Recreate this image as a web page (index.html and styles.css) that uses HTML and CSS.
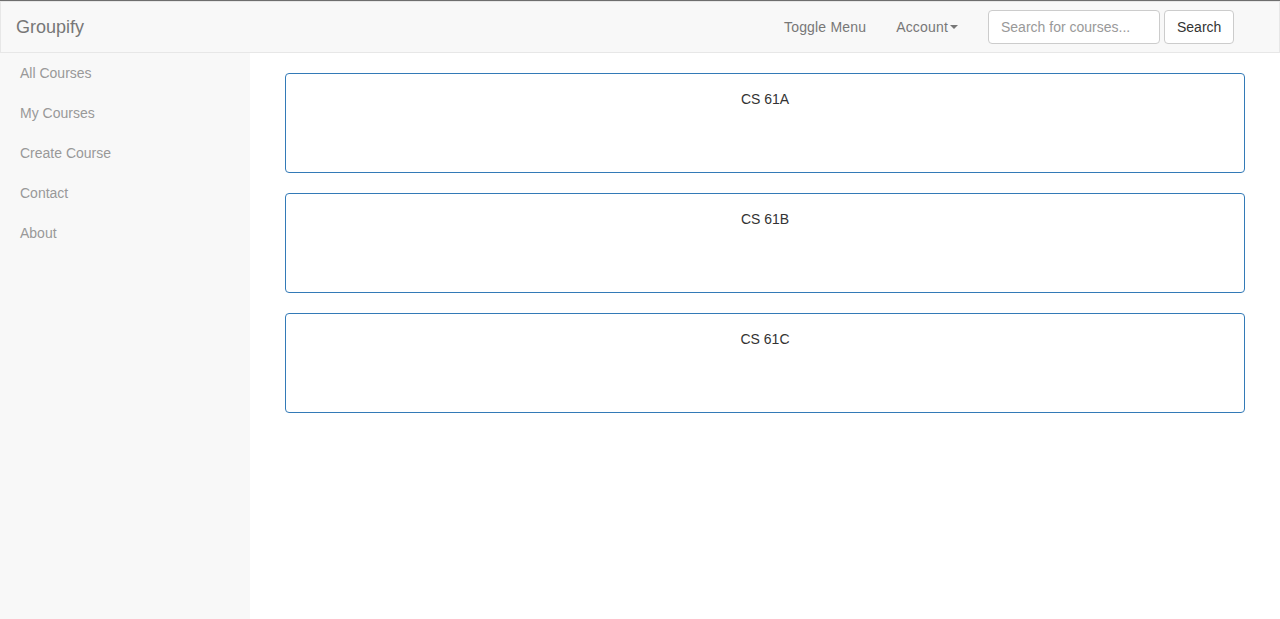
FILE: index.html
```html
<!DOCTYPE html>
<html>
<head>
<meta charset="utf-8">
<title>Groupify</title>
<link rel="stylesheet" href="styles.css">
</head>
<body>
<nav class="navbar">
  <a class="brand" href="#">Groupify</a>
  <div class="nav-right">
    <a class="nav-link" href="#">Toggle Menu</a>
    <a class="nav-link" href="#">Account<span class="caret"></span></a>
    <form class="nav-form">
      <input class="search-input" type="text" placeholder="Search for courses...">
      <button class="search-btn" type="button">Search</button>
    </form>
  </div>
</nav>
<div class="layout">
  <aside class="sidebar">
    <a class="side-link" href="#">All Courses</a>
    <a class="side-link" href="#">My Courses</a>
    <a class="side-link" href="#">Create Course</a>
    <a class="side-link" href="#">Contact</a>
    <a class="side-link" href="#">About</a>
  </aside>
  <main class="content">
    <div class="course-card">CS 61A</div>
    <div class="course-card">CS 61B</div>
    <div class="course-card">CS 61C</div>
  </main>
</div>
</body>
</html>
```
FILE: styles.css
```css
* { box-sizing: border-box; }
html, body { height: 100%; }
body {
  margin: 0;
  font-family: "Liberation Sans", Arial, Helvetica, sans-serif;
  font-size: 14px;
  line-height: 20px;
  color: #333;
  background: #fff;
  border-top: 1px solid #6e6e6e;
  display: flex;
  flex-direction: column;
}
a { text-decoration: none; }
.navbar {
  display: flex;
  align-items: flex-start;
  justify-content: space-between;
  height: 52px;
  background: #f8f8f8;
  border: 1px solid #e7e7e7;
  flex: none;
}
.brand {
  padding: 15px 15px;
  font-size: 18px;
  line-height: 20px;
  color: #777;
}
.nav-right {
  display: flex;
  align-items: flex-start;
  padding-right: 45px;
}
.nav-link {
  display: flex;
  align-items: center;
  padding: 15px;
  color: #777;
  line-height: 20px;
  letter-spacing: 0.18px;
}
.caret {
  display: inline-block;
  width: 0;
  height: 0;
  margin-left: 2px;
  border-top: 4px solid #777;
  border-left: 4px solid transparent;
  border-right: 4px solid transparent;
}
.nav-form {
  display: flex;
  margin: 8px 0 0 0;
  padding-left: 15px;
}
.search-input {
  width: 172px;
  height: 34px;
  padding: 6px 12px;
  font: inherit;
  font-size: 14px;
  color: #555;
  background: #fff;
  border: 1px solid #ccc;
  border-radius: 4px;
  outline: none;
}
.search-input::placeholder { color: #999; }
.search-btn {
  margin-left: 4px;
  width: 70px;
  height: 34px;
  padding: 6px 12px;
  font: inherit;
  font-size: 14px;
  color: #333;
  background: #fff;
  border: 1px solid #ccc;
  border-radius: 4px;
}
.layout {
  display: flex;
  flex: 1;
}
.sidebar {
  width: 250px;
  background: #f8f8f8;
  display: flex;
  flex-direction: column;
  flex: none;
}
.side-link {
  padding: 10px 20px;
  color: #999;
  line-height: 20px;
}
.content {
  flex: 1;
  padding: 20px 35px;
  display: flex;
  flex-direction: column;
  gap: 20px;
}
.course-card {
  height: 100px;
  border: 1px solid #337ab7;
  border-radius: 4px;
  text-align: center;
  padding-top: 15px;
  color: #333;
}
```
